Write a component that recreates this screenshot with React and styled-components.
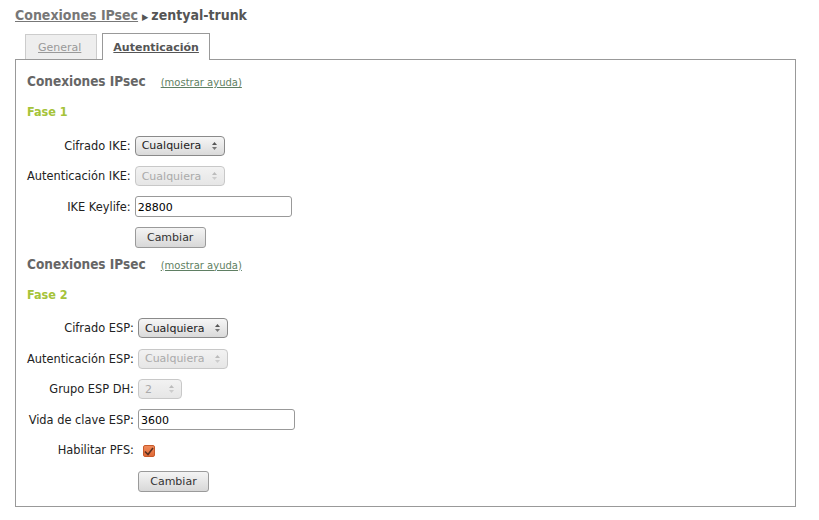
import React from 'react';
import styled, { createGlobalStyle, css } from 'styled-components';

const GlobalStyle = createGlobalStyle`
  body {
    margin: 0;
    background: #ffffff;
    font-family: "DejaVu Sans", Verdana, sans-serif;
    color: #333;
  }
`;

const headFont = css`
  font-family: "DejaVu Sans Condensed", "DejaVu Sans", sans-serif;
  font-stretch: condensed;
  font-weight: bold;
`;

const Page = styled.div`
  width: 819px;
  height: 520px;
  padding: 5px 24px 0 15px;
  box-sizing: border-box;
`;

const Title = styled.h1`
  ${headFont};
  margin: 0;
  font-size: 14px;
  line-height: 20px;
  color: #555;
`;

const TitleLink = styled.a`
  color: #777;
  text-decoration: underline;
`;

const Arrow = styled.span`
  font-size: 9px;
  margin: 0 3px 0 4px;
  color: #555;
`;

const Tabs = styled.div`
  display: flex;
  align-items: flex-end;
  gap: 5px;
  margin: 5px 0 0 10px;
  height: 27px;
  position: relative;
  z-index: 1;
`;

const Tab = styled.a`
  display: flex;
  align-items: center;
  box-sizing: border-box;
  font-size: 11px;
  text-decoration: underline;
  border: 1px solid #bbb;
  border-bottom: none;
  ${({ $active }) =>
    $active
      ? css`
          height: 27px;
          padding: 0 10px 0 10px;
          background: #fff;
          border-color: #999;
          color: #555;
          font-weight: bold;
          margin-bottom: -1px;
        `
      : css`
          height: 25px;
          padding: 0 15px 0 12px;
          background: #eee;
          border-color: #ccc;
          color: #999;
        `}
`;

const Panel = styled.div`
  border: 1px solid #999;
  padding: 10px 11px 10px 11px;
  height: 448px;
  box-sizing: border-box;
  width: 781px;
`;

const SectionHead = styled.div`
  display: flex;
  align-items: baseline;
  height: 22px;
  line-height: 22px;
`;

const SectionTitle = styled.h2`
  ${headFont};
  margin: 0;
  font-size: 13.5px;
  color: #666;
`;

const HelpLink = styled.a`
  margin-left: 15px;
  font-size: 10px;
  color: #5f7f63;
  text-decoration: underline;
`;

const Phase = styled.h3`
  ${headFont};
  margin: 10px 0 0;
  font-size: 12.5px;
  line-height: 20px;
  color: #a5c339;
`;

const Form = styled.div`
  display: grid;
  grid-template-columns: max-content max-content;
  grid-auto-rows: 30.5px;
  column-gap: 4px;
  align-items: center;
  margin-top: 8.5px;
`;

const Label = styled.label`
  justify-self: end;
  font-size: 11.4px;
  color: #222;
`;

const controlFace = css`
  box-sizing: border-box;
  height: 20px;
  border-radius: 4px;
  font-family: inherit;
  font-size: 11px;
`;

const Select = styled.div`
  ${controlFace};
  display: flex;
  align-items: center;
  justify-content: space-between;
  width: ${({ $w }) => $w}px;
  padding: 0 6px 0 6px;
  border: 1px solid ${({ $disabled }) => ($disabled ? '#c8c8c8' : '#8a8a8a')};
  background: ${({ $disabled }) =>
    $disabled
      ? 'linear-gradient(#f2f2f2, #e6e6e6)'
      : 'linear-gradient(#f6f6f6, #dadada)'};
  color: ${({ $disabled }) => ($disabled ? '#aaa' : '#222')};
`;

const Input = styled.div`
  ${controlFace};
  height: 21px;
  border-radius: 3px;
  width: 157px;
  display: flex;
  align-items: center;
  padding: 2px 2px 0;
  border: 1px solid #999;
  background: #fff;
  color: #000;
`;

const Button = styled.button`
  ${controlFace};
  height: 21px;
  width: 71px;
  border-radius: 3px;
  border: 1px solid #9a9a9a;
  background: linear-gradient(#f4f4f4, #d8d8d8);
  color: #333;
  padding: 0;
`;

const Check = styled.span`
  display: inline-flex;
  align-items: center;
  justify-content: center;
  width: 12px;
  height: 12px;
  margin-left: 5px;
  box-sizing: border-box;
  border: 1px solid #c85a2a;
  border-radius: 2px;
  background: linear-gradient(#f08a5a, #e06a38);
`;

const Spin = ({ dim }) => (
  <svg width="7" height="12" viewBox="0 0 7 12">
    <path d="M1 5 L3.5 2 L6 5 Z" fill={dim ? '#bbb' : '#555'} />
    <path d="M1 7 L3.5 10 L6 7 Z" fill={dim ? '#ccc' : '#777'} />
  </svg>
);

const Field = ({ label, children }) => (
  <>
    <Label>{label}</Label>
    <div>{children}</div>
  </>
);

const Dropdown = ({ value, width, disabled }) => (
  <Select $w={width} $disabled={disabled}>
    <span>{value}</span>
    <Spin dim={disabled} />
  </Select>
);

const Section = ({ phase, children }) => (
  <>
    <SectionHead>
      <SectionTitle>Conexiones IPsec</SectionTitle>
      <HelpLink>(mostrar ayuda)</HelpLink>
    </SectionHead>
    <Phase>{phase}</Phase>
    <Form>{children}</Form>
  </>
);

export default function App() {
  return (
    <Page>
      <GlobalStyle />
      <Title>
        <TitleLink>Conexiones IPsec</TitleLink>
        <Arrow>▶</Arrow>zentyal-trunk
      </Title>
      <Tabs>
        <Tab>General</Tab>
        <Tab $active>Autenticación</Tab>
      </Tabs>
      <Panel>
        <Section phase="Fase 1">
          <Field label="Cifrado IKE:">
            <Dropdown value="Cualquiera" width={90} />
          </Field>
          <Field label="Autenticación IKE:">
            <Dropdown value="Cualquiera" width={90} disabled />
          </Field>
          <Field label="IKE Keylife:">
            <Input>28800</Input>
          </Field>
          <Field label="">
            <Button>Cambiar</Button>
          </Field>
        </Section>
        <Section phase="Fase 2">
          <Field label="Cifrado ESP:">
            <Dropdown value="Cualquiera" width={90} />
          </Field>
          <Field label="Autenticación ESP:">
            <Dropdown value="Cualquiera" width={90} disabled />
          </Field>
          <Field label="Grupo ESP DH:">
            <Dropdown value="2" width={44} disabled />
          </Field>
          <Field label="Vida de clave ESP:">
            <Input>3600</Input>
          </Field>
          <Field label="Habilitar PFS:">
            <Check>
              <svg width="10" height="9" viewBox="0 0 10 9">
                <path d="M1 4.5 L4 7.5 L9 1" stroke="#5a3020" strokeWidth="1.6" fill="none" />
              </svg>
            </Check>
          </Field>
          <Field label="">
            <Button>Cambiar</Button>
          </Field>
        </Section>
      </Panel>
    </Page>
  );
}
